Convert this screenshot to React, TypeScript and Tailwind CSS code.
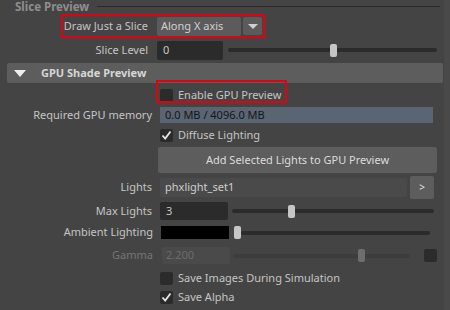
import React from 'react';

const font = { fontFamily: '"Noto Sans", "Open Sans", Arial, sans-serif' };

function Check({ checked }: { checked?: boolean }) {
  return (
    <div className="w-[13px] h-[13px] bg-[#2b2b2b] rounded-[2px] flex items-center justify-center shrink-0">
      {checked && (
        <svg width="11" height="11" viewBox="0 0 11 11">
          <polyline points="1.5,5.5 4.2,8.5 9.5,1.5" fill="none" stroke="#e6e6e6" strokeWidth="1.8" />
        </svg>
      )}
    </div>
  );
}

function Slider({ left, dim }: { left: number; dim?: boolean }) {
  return (
    <div className="relative flex-1 h-[13px] flex items-center">
      <div className={`w-full h-[4px] rounded-full ${dim ? 'bg-[#3d3d3d]' : 'bg-[#2b2b2b]'}`}></div>
      <div
        className={`absolute top-0 w-[7px] h-[13px] rounded-[2px] ${dim ? 'bg-[#6e6e6e]' : 'bg-[#c6c6c6]'}`}
        style={{ left }}
      ></div>
    </div>
  );
}

export default function App() {
  return (
    <div className="w-[450px] h-[310px] bg-[#444444] text-[11px] text-[#c4c4c4] overflow-hidden flex" style={font}>
      <div className="w-[444px] flex flex-col">
        {/* Slice Preview header */}
        <div className="h-[14px] flex items-center pl-[15px] pr-[4px] gap-[8px]">
          <span className="text-[#8e8e8e] font-bold leading-[14px] text-[11.5px]">Slice Preview</span>
          <div className="flex-1 h-px bg-[#2a2a2a] mt-[-2px]"></div>
        </div>

        {/* Draw Just a Slice */}
        <div className="relative h-[24px] flex items-center">
          <div className="w-[148px] text-right">Draw Just a Slice</div>
          <div className="ml-[9px] w-[84px] h-[19px] bg-[#5b5b5b] rounded-[2px] flex items-center pl-[4px] text-[#d0d0d0]">Along X axis</div>
          <div className="ml-[2px] w-[19px] h-[18px] bg-[#5b5b5b] rounded-[2px] flex items-center justify-center">
            <div className="w-0 h-0 border-l-[5px] border-r-[5px] border-t-[5px] border-l-transparent border-r-transparent border-t-[#cfcfcf]"></div>
          </div>
          <div className="absolute left-[61px] top-0 w-[204px] h-[24px] border-2 border-[#e3000f] pointer-events-none"></div>
        </div>

        {/* Slice Level */}
        <div className="h-[24px] flex items-center">
          <div className="w-[148px] text-right">Slice Level</div>
          <div className="ml-[9px] w-[66px] h-[19px] bg-[#2b2b2b] rounded-[2px] flex items-center pl-[6px] text-[#c8c8c8]">0</div>
          <div className="ml-[5px] mr-[7px] flex-1 flex">
            <Slider left={102} />
          </div>
        </div>

        {/* GPU Shade Preview header */}
        <div className="mt-[1px] ml-[7px] mr-[1px] h-[20px] bg-[#5d5d5d] rounded-[2px] flex items-center">
          <div className="ml-[7px] w-0 h-0 border-l-[6px] border-r-[6px] border-t-[7px] border-l-transparent border-r-transparent border-t-[#eeeeee]"></div>
          <span className="ml-[15px] font-bold text-[#d6d6d6]">GPU Shade Preview</span>
        </div>

        {/* Enable GPU Preview */}
        <div className="h-[22px] mt-[1px] flex items-center pl-[160px]">
          <div className="relative flex items-center gap-[5px]">
            <Check />
            <span>Enable GPU Preview</span>
            <div className="absolute left-[-4px] top-[-7px] w-[131px] h-[23px] border-2 border-[#e3000f] pointer-events-none"></div>
          </div>
        </div>

        {/* Required GPU memory */}
        <div className="h-[18px] flex items-center">
          <div className="w-[152px] text-right">Required GPU memory</div>
          <div className="ml-[8px] w-[273px] h-[16px] bg-[#5a6573] flex items-center pl-[5px] text-[#151515]">0.0 MB / 4096.0 MB</div>
        </div>

        {/* Diffuse Lighting */}
        <div className="h-[23px] flex items-center pl-[160px] gap-[5px]">
          <Check checked />
          <span>Diffuse Lighting</span>
        </div>

        {/* Add Selected Lights button */}
        <div className="pl-[158px]">
          <div className="w-[279px] h-[26px] bg-[#5d5d5d] rounded-[2px] flex items-center justify-center text-[#dcdcdc]">
            Add Selected Lights to GPU Preview
          </div>
        </div>

        {/* Lights */}
        <div className="h-[26px] mt-[1px] flex items-center">
          <div className="w-[152px] text-right">Lights</div>
          <div className="ml-[8px] w-[247px] h-[19px] bg-[#4a4a4a] rounded-[2px] flex items-center pl-[5px] text-[#cfcfcf]">phxlight_set1</div>
          <div className="ml-[3px] w-[24px] h-[23px] bg-[#5d5d5d] rounded-[2px] flex items-center justify-center text-[10px] text-[#e0e0e0]">&gt;</div>
        </div>

        {/* Max Lights */}
        <div className="h-[22px] flex items-center">
          <div className="w-[152px] text-right">Max Lights</div>
          <div className="ml-[8px] w-[68px] h-[18px] bg-[#2b2b2b] rounded-[2px] flex items-center pl-[6px] text-[#c8c8c8]">3</div>
          <div className="ml-[4px] mr-[10px] flex-1 flex">
            <Slider left={56} />
          </div>
        </div>

        {/* Ambient Lighting */}
        <div className="h-[21px] flex items-center">
          <div className="w-[153px] text-right">Ambient Lighting</div>
          <div className="ml-[8px] w-[68px] h-[13px] bg-black"></div>
          <div className="ml-[5px] w-[7px] h-[13px] rounded-[2px] bg-[#c6c6c6]"></div>
          <div className="mr-[14px] flex-1 h-[4px] rounded-full bg-[#2b2b2b]"></div>
        </div>

        {/* Gamma */}
        <div className="h-[25px] flex items-center">
          <div className="w-[153px] text-right text-[#767676]">Gamma</div>
          <div className="ml-[9px] w-[68px] h-[17px] bg-[#4a4a4a] rounded-[2px] flex items-center pl-[4px] text-[#6c6c6c]">2.200</div>
          <div className="ml-[3px] flex-1 flex">
            <Slider left={125} dim />
          </div>
          <div className="ml-[14px] mr-[7px] w-[13px] h-[13px] bg-[#2b2b2b] rounded-[2px]"></div>
        </div>

        {/* Save Images During Simulation */}
        <div className="h-[21px] flex items-center pl-[160px] gap-[5px]">
          <Check />
          <span>Save Images During Simulation</span>
        </div>

        {/* Save Alpha */}
        <div className="h-[17px] flex items-center pl-[160px] gap-[5px]">
          <Check checked />
          <span>Save Alpha</span>
        </div>
      </div>
      <div className="flex-1 bg-[#494949]"></div>
    </div>
  );
}
